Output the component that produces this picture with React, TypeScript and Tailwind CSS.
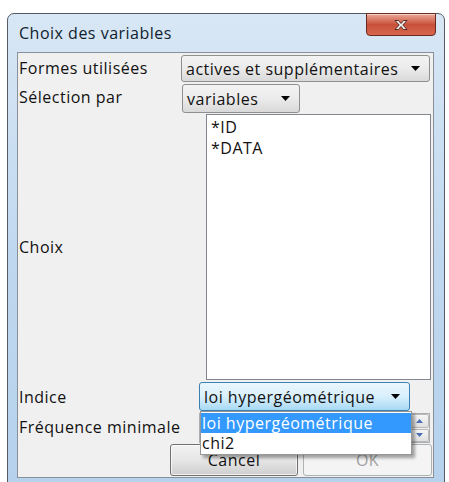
import React from 'react';

// Little black triangle used by every combo box
function ComboArrow() {
  return (
    <svg width="9" height="5" viewBox="0 0 9 5" className="shrink-0">
      <path d="M0 0h9L4.5 5z" fill="#000" />
    </svg>
  );
}

function ComboBox({ value, width, focused = false }: { value: string; width: number; focused?: boolean }) {
  const skin = focused
    ? 'border-[#3c7fb1] bg-gradient-to-b from-[#eaf6fd] via-[#d9f0fc] to-[#a7d9f5]'
    : 'border-[#8e8f8f] bg-gradient-to-b from-[#f3f3f3] via-[#ebebeb] to-[#d9d9d9]';
  return (
    <div
      className={`flex h-full items-center justify-between rounded-[3px] border pl-[4px] pr-[9px] ${skin}`}
      style={{ width }}
    >
      <span className="whitespace-nowrap">{value}</span>
      <ComboArrow />
    </div>
  );
}

function SpinArrow({ up }: { up: boolean }) {
  return (
    <svg width="7" height="4" viewBox="0 0 7 4">
      <path d={up ? 'M0 4h7L3.5 0z' : 'M0 0h7L3.5 4z'} fill="#4a6fb5" />
    </svg>
  );
}

export default function App() {
  const items = ['*ID', '*DATA'];
  const indices = ['loi hypergéométrique', 'chi2'];

  return (
    <div className="h-[482px] w-[449px] overflow-hidden bg-white pl-[7px] pt-[13px] font-['Open_Sans',sans-serif] text-[16px] leading-none tracking-[0.5px] text-[#111]">
      {/* Window frame */}
      <div className="h-[480px] w-[438px] rounded-t-[7px] border border-[#555b63] bg-gradient-to-b from-[#d8e7f5] via-[#c0d8ef] to-[#b5d1ec] px-[9px]">
        {/* Title bar */}
        <div className="flex h-[38px] items-start justify-between">
          <span className="pl-[2px] pt-[11px] text-[#0f1d2e]">Choix des variables</span>
          <div className="mr-[-1px] mt-[-1px] flex h-[23px] w-[70px] items-center justify-center rounded-b-[4px] border border-[#6b2a1f] bg-gradient-to-b from-[#e9a898] via-[#c7503a] to-[#d8664d] shadow-[inset_0_1px_0_rgba(255,255,255,0.5)]">
            <svg width="16" height="12" viewBox="0 0 16 12">
              <path
                d="M2 1.5h3.5L8 4.5l2.5-3H14L9.8 6 14 10.5h-3.5L8 7.5l-2.5 3H2L6.2 6z"
                fill="#f2f2f2"
                stroke="#5a2a22"
                strokeWidth="1"
                strokeLinejoin="round"
              />
            </svg>
          </div>
        </div>

        {/* Client area */}
        <div className="relative h-[426px] w-[417px] border border-[#8a9099] bg-[#f0f0f0]">
          {/* Formes utilisées */}
          <div className="flex h-[30px] items-start">
            <span className="w-[163px] pl-[1px] pt-[7px]">Formes utilisées</span>
            <div className="mt-[2px] h-[27px]">
              <ComboBox value="actives et supplémentaires" width={249} />
            </div>
          </div>

          {/* Sélection par */}
          <div className="flex h-[31px] items-start">
            <span className="w-[164px] pl-[1px] pt-[6px]">Sélection par</span>
            <div className="mt-[1px] h-[29px]">
              <ComboBox value="variables" width={118} />
            </div>
          </div>

          {/* Choix list */}
          <div className="flex h-[266px] items-center">
            <span className="w-[188px] pl-[1px]">Choix</span>
            <div className="flex h-full w-[225px] flex-col gap-[5px] self-stretch border border-[#82878f] bg-white pl-[4px] pt-[4px]">
              {items.map((item) => (
                <span key={item}>{item}</span>
              ))}
            </div>
          </div>

          {/* Indice */}
          <div className="mt-[2px] flex h-[29px] items-center">
            <span className="w-[181px] pl-[1px]">Indice</span>
            <div className="h-[29px]">
              <ComboBox value="loi hypergéométrique" width={211} focused />
            </div>
          </div>

          {/* Fréquence minimale */}
          <div className="flex h-[33px] items-start">
            <span className="w-[181px] pl-[1px] pt-[8px]">Fréquence minimale</span>
            <div className="mt-[2px] flex h-[30px] w-[231px] border border-[#abadb3] bg-white">
              <div className="flex-1" />
              <div className="flex w-[19px] flex-col gap-[1px] bg-[#f0f0f0]">
                <div className="flex flex-1 items-center justify-center rounded-[2px] border border-[#b9b9b9] bg-gradient-to-b from-[#f6f6f6] to-[#e0e0e0]">
                  <SpinArrow up />
                </div>
                <div className="flex flex-1 items-center justify-center rounded-[2px] border border-[#b9b9b9] bg-gradient-to-b from-[#f6f6f6] to-[#e0e0e0]">
                  <SpinArrow up={false} />
                </div>
              </div>
            </div>
          </div>

          {/* Buttons */}
          <div className="flex h-[32px] gap-[5px] pl-[152px]">
            <button className="flex h-full w-[128px] items-center justify-center rounded-[3px] border border-[#707070] bg-gradient-to-b from-[#f2f2f2] via-[#e6e6e6] to-[#cfcfcf] text-[16px] tracking-[0.5px] text-[#111] shadow-[inset_0_0_0_1px_rgba(255,255,255,0.7)]">
              Cancel
            </button>
            <button className="flex h-full w-[129px] items-center justify-center rounded-[3px] border border-[#adb2b5] bg-[#f4f4f4] text-[16px] tracking-[0.5px] text-[#a0a0a0]">
              OK
            </button>
          </div>

          {/* Open popup of the Indice combo */}
          <div className="absolute left-[182px] top-[358px] w-[212px] border border-[#979797] bg-white py-[1px] shadow-[3px_3px_3px_rgba(0,0,0,0.35)]">
            {indices.map((opt, i) => (
              <div
                key={opt}
                className={`flex h-[20px] items-center pl-[1px] ${i === 0 ? 'bg-[#3399ff] text-white' : 'text-[#111]'}`}
              >
                {opt}
              </div>
            ))}
          </div>
        </div>
      </div>
    </div>
  );
}
